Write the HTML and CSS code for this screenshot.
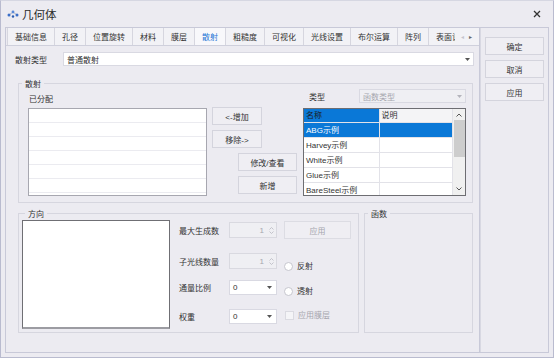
FILE: index.html
```html
<!DOCTYPE html>
<html lang="zh-CN">

<head>
    <meta charset="UTF-8">
    <meta name="viewport" content="width=device-width, initial-scale=1.0">
    <title>几何体</title>
    <link rel="stylesheet" href="styles.css">
</head>

<body>

    <div class="window">

        <div class="titlebar">
            <svg class="appicon" viewBox="0 0 12 8">
                <path d="M2 5 L6 2 L10 5" fill="none" stroke="#9aa3b8" stroke-width="0.8"/>
                <circle cx="2" cy="5" r="1.5" fill="#3b6fc8"/>
                <circle cx="6" cy="2" r="1.4" fill="#5a8ad8"/>
                <circle cx="10" cy="5" r="1.5" fill="#3b6fc8"/>
                <circle cx="6" cy="6.5" r="1.2" fill="#2c5cb0"/>
            </svg>
            <span class="title">几何体</span>
            <svg class="close" viewBox="0 0 8 8">
                <path d="M1 1 L7 7 M7 1 L1 7" stroke="#333" stroke-width="1.3"/>
            </svg>
        </div>

        <div class="main">

            <div class="tabctl">
                <div class="tabstrip">
                    <div class="tab">基础信息</div>
                    <div class="tab">孔径</div>
                    <div class="tab">位置旋转</div>
                    <div class="tab">材料</div>
                    <div class="tab">膜层</div>
                    <div class="tab active">散射</div>
                    <div class="tab">粗糙度</div>
                    <div class="tab">可视化</div>
                    <div class="tab">光线设置</div>
                    <div class="tab">布尔运算</div>
                    <div class="tab">阵列</div>
                    <div class="tab clipped">表面设计</div>
                    <div class="tabnav">
                        <span class="prev">&#9666;</span>
                        <span class="next">&#9656;</span>
                    </div>
                </div>

                <div class="tabpage">

                    <div class="row">
                        <span class="lbl">散射类型</span>
                        <div class="combo">
                            <span>普通散射</span>
                            <svg class="arrow" viewBox="0 0 5 3"><path d="M0 0 H5 L2.5 3 Z"/></svg>
                        </div>
                    </div>

                    <fieldset class="group scatter">
                        <legend>散射</legend>
                        <div class="assigned">
                            <div class="caption">已分配</div>
                            <div class="listbox"></div>
                        </div>
                        <div class="actions">
                            <button class="btn">&lt;-增加</button>
                            <button class="btn">移除-&gt;</button>
                            <button class="btn wide">修改/查看</button>
                            <button class="btn wide">新增</button>
                        </div>
                        <div class="library">
                            <div class="kindrow">
                                <span class="kind">类型</span>
                                <div class="combo disabled">
                                    <span>函数类型</span>
                                    <svg class="arrow" viewBox="0 0 5 3"><path d="M0 0 H5 L2.5 3 Z"/></svg>
                                </div>
                            </div>
                            <div class="grid">
                                <table class="gridtable">
                                    <thead>
                                        <tr><th class="sel">名称</th><th>说明</th></tr>
                                    </thead>
                                    <tbody>
                                        <tr class="sel"><td>ABG示例</td><td></td></tr>
                                        <tr><td>Harvey示例</td><td></td></tr>
                                        <tr><td>White示例</td><td></td></tr>
                                        <tr><td>Glue示例</td><td></td></tr>
                                        <tr><td>BareSteel示例</td><td></td></tr>
                                    </tbody>
                                </table>
                                <div class="vscroll">
                                    <svg class="sarrow" viewBox="0 0 6 4"><path d="M0.5 3.5 L3 1 L5.5 3.5" fill="none" stroke="#555" stroke-width="1"/></svg>
                                    <span class="thumb"></span>
                                    <svg class="sarrow down" viewBox="0 0 6 4"><path d="M0.5 0.5 L3 3 L5.5 0.5" fill="none" stroke="#555" stroke-width="1"/></svg>
                                </div>
                            </div>
                        </div>
                    </fieldset>

                    <div class="lower">
                        <fieldset class="group dir">
                            <legend>方向</legend>
                            <div class="preview"></div>
                            <div class="form">
                                <div class="frow">
                                    <span class="flbl">最大生成数</span>
                                    <div class="spin">
                                        <span>1</span>
                                        <svg viewBox="0 0 5 9"><path d="M0.5 3.5 L2.5 1.5 L4.5 3.5 M0.5 5.5 L2.5 7.5 L4.5 5.5" fill="none" stroke="#b8b8c0" stroke-width="0.8"/></svg>
                                    </div>
                                </div>
                                <div class="frow">
                                    <span class="flbl">子光线数量</span>
                                    <div class="spin">
                                        <span>1</span>
                                        <svg viewBox="0 0 5 9"><path d="M0.5 3.5 L2.5 1.5 L4.5 3.5 M0.5 5.5 L2.5 7.5 L4.5 5.5" fill="none" stroke="#b8b8c0" stroke-width="0.8"/></svg>
                                    </div>
                                </div>
                                <div class="frow">
                                    <span class="flbl">通量比例</span>
                                    <div class="combo small">
                                        <span>0</span>
                                        <svg class="arrow" viewBox="0 0 5 3"><path d="M0 0 H5 L2.5 3 Z"/></svg>
                                    </div>
                                </div>
                                <div class="frow">
                                    <span class="flbl">权重</span>
                                    <div class="combo small">
                                        <span>0</span>
                                        <svg class="arrow" viewBox="0 0 5 3"><path d="M0 0 H5 L2.5 3 Z"/></svg>
                                    </div>
                                </div>
                            </div>
                            <div class="opts">
                                <button class="btn apply" disabled>应用</button>
                                <label class="opt"><span class="radio"></span>反射</label>
                                <label class="opt"><span class="radio"></span>透射</label>
                                <label class="opt off"><span class="check"></span>应用膜层</label>
                            </div>
                        </fieldset>
                        <fieldset class="group func">
                            <legend>函数</legend>
                        </fieldset>
                    </div>

                </div>
            </div>

            <div class="side">
                <button class="btn side-btn">确定</button>
                <button class="btn side-btn">取消</button>
                <button class="btn side-btn">应用</button>
            </div>

        </div>

    </div>

</body>

</html>
```

FILE: styles.css
```css
:root {
    --panel: #ecebf1;
    --line: #d2d2dc;
    --text: #333333;
    --muted: #a6a6ae;
    --select: #0a78d7;
}

* {
    margin: 0px;
    padding: 0px;
    box-sizing: border-box;
}

body {
    background-color: var(--panel);
    font-family: "Liberation Sans", "Noto Sans CJK SC", sans-serif;
    font-size: 8px;
    color: var(--text);
}

.window {
    width: 554px;
    height: 358px;
    border: 1px solid #b9bbcf;
    border-top-color: #d6d7e2;
    background-color: var(--panel);
}

/* title bar */

.titlebar {
    height: 26px;
    display: flex;
    align-items: center;
    padding-left: 6px;
}

.appicon {
    width: 12px;
    height: 8px;
    margin-right: 3px;
}

.title {
    font-family: "Noto Sans CJK SC", sans-serif;
    font-size: 11.5px;
    color: #2a2a2a;
}

.close {
    width: 8px;
    height: 8px;
    margin-left: auto;
    margin-right: 12px;
}

/* frame */

.main {
    height: 326px;
    margin: 0px 4px;
    border: 1px solid #c8c9d8;
    display: flex;
}

.tabctl {
    width: 474px;
    border-right: 1px solid #c8c9d8;
    display: flex;
    flex-direction: column;
}

.tabstrip {
    height: 18px;
    display: flex;
    padding-left: 1px;
    border-bottom: 1px solid #cfd0dc;
}

.tab {
    height: 17px;
    line-height: 17px;
    padding: 0px 7px;
    border-left: 1px solid #d6d6df;
    background-color: #f2f2f6;
    white-space: nowrap;
    font-family: "Noto Sans CJK SC", sans-serif;
}

.tab.active {
    color: #2878d6;
    background-color: #f8f8fb;
}

.tab.clipped {
    width: 27px;
    overflow: hidden;
    padding-right: 0px;
}

.tabnav {
    flex: 1;
    display: flex;
    align-items: center;
    gap: 5px;
    padding-left: 6px;
    background-color: #f2f2f6;
    font-size: 6px;
}

.tabnav .prev {
    color: #c4c4cc;
}

.tabnav .next {
    color: #666;
}

.tabpage {
    flex: 1;
    padding: 6px 5px 0px 9px;
}

/* controls */

.row {
    display: flex;
    align-items: center;
    height: 14px;
}

.lbl {
    width: 48px;
    font-family: "Noto Sans CJK SC", sans-serif;
}

.combo {
    flex: 1;
    height: 14px;
    display: flex;
    align-items: center;
    padding: 0px 3px;
    background-color: #ffffff;
    border: 1px solid #d9d9e2;
    font-family: "Noto Sans CJK SC", sans-serif;
}

.combo .arrow {
    width: 5px;
    height: 3px;
    margin-left: auto;
    fill: #555;
}

.combo.disabled {
    background-color: #efeff3;
    color: var(--muted);
}

.combo.disabled .arrow {
    fill: #b4b4bc;
}

.combo.small {
    height: 15px;
    padding: 0px 4px 0px 3px;
    font-family: "Liberation Sans", sans-serif;
}

.btn {
    height: 18px;
    width: 50px;
    background-color: #efeef3;
    border: 1px solid #d4d4dd;
    color: var(--text);
    font-family: "Liberation Sans", "Noto Sans CJK SC", sans-serif;
    font-size: 8px;
}

.btn.wide {
    width: 59px;
    margin-left: 26px;
}

/* group boxes */

.group {
    border: 1px solid #d6d6df;
    min-width: 0px;
}

.group legend {
    font-family: "Noto Sans CJK SC", sans-serif;
    line-height: 11px;
    padding: 0px 3px;
    margin-left: 3px;
}

.scatter {
    display: flex;
    margin: 12px 1px 0px 3px;
    padding-bottom: 6px;
}

.assigned {
    width: 179px;
    margin-left: 9px;
}

.caption {
    height: 19px;
    line-height: 19px;
    padding-left: 1px;
    font-family: "Noto Sans CJK SC", sans-serif;
}

.listbox {
    height: 88px;
    border: 1px solid #a7a7b0;
    background-color: #ffffff;
    background-image: repeating-linear-gradient(to bottom, #ffffff 0px, #ffffff 13px, #ebebf0 13px, #ebebf0 14px);
    background-position: 0px 0px;
}

.actions {
    width: 85px;
    margin-left: 5px;
    padding-top: 18px;
    display: flex;
    flex-direction: column;
    align-items: flex-start;
    gap: 5px;
}

.library {
    width: 163px;
    margin-left: 6px;
}

.kindrow {
    display: flex;
    align-items: center;
    height: 14px;
    margin-bottom: 5px;
}

.kind {
    width: 56px;
    padding-left: 6px;
    font-family: "Noto Sans CJK SC", sans-serif;
}

.grid {
    height: 88px;
    display: flex;
    border: 1px solid #6d6d72;
    background-color: #ffffff;
    overflow: hidden;
}

.gridtable {
    width: 149px;
    border-collapse: collapse;
    table-layout: fixed;
    align-self: flex-start;
}

.gridtable th,
.gridtable td {
    height: 15px;
    padding: 0px 2px;
    text-align: left;
    font-weight: normal;
    white-space: nowrap;
    overflow: hidden;
    border-right: 1px solid #e2e2e8;
    border-bottom: 1px solid #e2e2e8;
}

.gridtable th {
    height: 13px;
    line-height: 12px;
    background-color: #f4f4f6;
    font-family: "Noto Sans CJK SC", sans-serif;
}

.gridtable th:first-child {
    width: 75px;
}

.gridtable th.sel {
    background-color: var(--select);
    color: #1b1b1b;
}

.gridtable tr.sel td {
    background-color: var(--select);
    color: #ffffff;
}

.vscroll {
    width: 12px;
    display: flex;
    flex-direction: column;
    align-items: center;
    background-color: #f0f0f0;
}

.sarrow {
    width: 6px;
    height: 4px;
    margin-top: 4px;
}

.sarrow.down {
    margin-top: auto;
    margin-bottom: 4px;
}

.thumb {
    width: 11px;
    height: 37px;
    margin-top: 3px;
    background-color: #cdcdcd;
}

/* lower groups */

.lower {
    display: flex;
    gap: 5px;
    margin: 5px 0px 0px 3px;
}

.dir {
    width: 341px;
    display: flex;
    padding: 1px 0px 3px 3px;
}

.func {
    width: 109px;
}

.preview {
    width: 148px;
    height: 109px;
    background-color: #ffffff;
    border: 1px solid #6f6f74;
    border-bottom: 2px solid #9c9ca2;
}

.form {
    width: 98px;
    margin-left: 9px;
}

.frow {
    display: flex;
    align-items: center;
    height: 16px;
}

.frow:nth-child(1) {
    margin-top: 2px;
}

.frow:nth-child(2) {
    margin-top: 15px;
}

.frow:nth-child(3) {
    margin-top: 10px;
}

.frow:nth-child(4) {
    margin-top: 13px;
}

.flbl {
    width: 50px;
    font-family: "Noto Sans CJK SC", sans-serif;
}

.spin {
    width: 48px;
    height: 16px;
    display: flex;
    align-items: center;
    justify-content: flex-end;
    gap: 5px;
    padding-right: 2px;
    background-color: #efeff3;
    border: 1px solid #d9d9e0;
    color: var(--muted);
}

.spin svg {
    width: 5px;
    height: 9px;
}

.combo.small {
    flex: 0 0 48px;
}

.opts {
    width: 67px;
    margin-left: 7px;
    display: flex;
    flex-direction: column;
}

.btn.apply {
    width: 67px;
    margin-top: 1px;
    color: var(--muted);
    border-color: #dcdce3;
}

.opt {
    height: 10px;
    display: flex;
    align-items: center;
    gap: 4px;
    font-family: "Noto Sans CJK SC", sans-serif;
    line-height: 10px;
}

.opt:nth-of-type(1) {
    margin-top: 22px;
}

.opt:nth-of-type(2) {
    margin-top: 15px;
}

.opt:nth-of-type(3) {
    margin-top: 14px;
}

.opt.off {
    color: var(--muted);
}

.radio {
    width: 9px;
    height: 9px;
    border-radius: 50%;
    border: 1px solid #c6c6ce;
    background-color: #ffffff;
}

.check {
    width: 9px;
    height: 9px;
    margin-left: 1px;
    border: 1px solid #dadae1;
    background-color: #f4f4f7;
}

/* right buttons */

.side {
    flex: 1;
    padding: 9px 0px 0px 4px;
    border-left: 1px solid #d8d8e2;
    display: flex;
    flex-direction: column;
    gap: 5px;
}

.side-btn {
    width: 59px;
}
```
